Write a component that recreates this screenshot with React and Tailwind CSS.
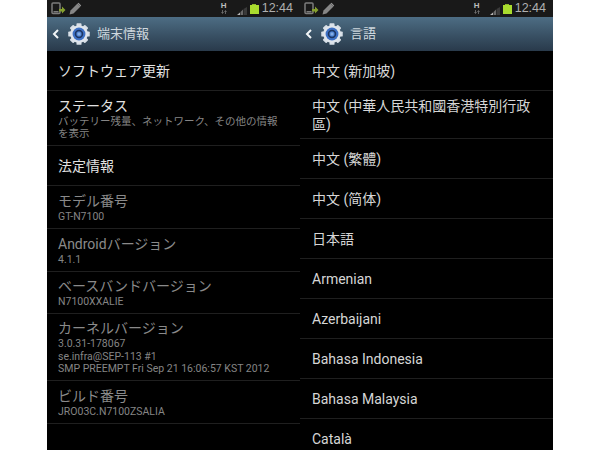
import React from "react";

function Gear({ id }) {
  const teeth = [0, 45, 90, 135, 180, 225, 270, 315];
  return (
    <svg width="22" height="22" viewBox="0 0 26 26" className="shrink-0">
      <defs>
        <radialGradient id={id} cx="50%" cy="50%" r="50%">
          <stop offset="0%" stopColor="#9fc2ee" />
          <stop offset="100%" stopColor="#3a72c8" />
        </radialGradient>
      </defs>
      {teeth.map((a) => (
        <rect key={a} x="10" y="0.3" width="6" height="6" rx="1" fill="#d9e0e8" transform={`rotate(${a} 13 13)`} />
      ))}
      <circle cx="13" cy="13" r="10.4" fill="#dfe5ec" />
      <circle cx="13" cy="13" r="7.6" fill="#3d70c4" />
      <circle cx="13" cy="13" r="5" fill="#1d3560" />
      <circle cx="13" cy="13" r="3.2" fill={`url(#${id})`} />
    </svg>
  );
}

function StatusBar() {
  return (
    <div className="h-[17px] shrink-0 bg-[#191919] flex items-center pl-[4px] pr-[7px]">
      <svg width="15" height="13" viewBox="0 0 15 13" className="shrink-0">
        <rect x="1" y="1" width="8" height="10.500" rx="1" fill="none" stroke="#7c7c7c" strokeWidth="1.5" />
        <rect x="2.500" y="9" width="5" height="1.500" fill="#7c7c7c" />
        <path d="M8 7h3V4.500l3.500 3.500-3.500 3.500V9.500H8z" fill="#86a02f" />
      </svg>
      <svg width="13" height="13" viewBox="0 0 13 13" className="shrink-0 ml-[3px]">
        <path d="M0.500 12.500l1-4L8.500 1.500l3 3-7 7z" fill="#868686" />
        <path d="M9.500 0.800l2.700 2.700-.8.8-2.700-2.700z" fill="#9a9a9a" />
      </svg>
      <div className="ml-auto flex items-center">
        <div className="flex flex-col items-center mr-[10px] mt-[-1px] text-[#bdbdbd] font-['Liberation_Sans',sans-serif]">
          <span className="block h-[8px] text-[8px] font-bold leading-[8px]">H</span>
          <svg width="6" height="4" viewBox="0 0 6 4" className="block">
            <path d="M1.500 0v3M0.500 2l1 1.500 1-1.500M4.500 4V1M3.500 2l1-1.500 1 1.500" fill="none" stroke="#777" strokeWidth="0.8" />
          </svg>
        </div>
        <svg width="10" height="8" viewBox="0 0 10 8" className="shrink-0 mr-[3px] mt-[5px]">
          <path d="M0 8h3V5.500L0 8z" fill="#b5b5b5" />
          <path d="M3.500 8h2.500V2.500L3.500 5z" fill="#6a6a6a" />
          <path d="M6.500 8H10V0L6.500 2z" fill="#3a3a3a" />
        </svg>
        <div className="flex flex-col items-center mr-[3px] mt-[1px]">
          <div className="w-[4px] h-px bg-[#8fb82a]" />
          <div className="w-[9px] h-[9px] bg-[#a9dc2e]" />
        </div>
        <span className="text-[12.5px] leading-[17px] text-[#b0b0b0] font-['Liberation_Sans',sans-serif]">12:44</span>
      </div>
    </div>
  );
}

function Header({ title, id }) {
  return (
    <div className="h-[34px] shrink-0 bg-gradient-to-b from-[#4d6d84] to-[#293a4b] flex items-center">
      <svg width="8" height="10" viewBox="0 0 8 10" className="shrink-0 ml-[5px]">
        <path d="M6 1L2 5l4 4" fill="none" stroke="#f2f5f7" strokeWidth="2" />
      </svg>
      <div className="ml-[8px] flex"><Gear id={id} /></div>
      <span className="ml-[7px] text-[13px] text-[#cfd8de]">{title}</span>
    </div>
  );
}

function Row({ h, title, sub, dim }) {
  return (
    <div style={{ height: h }} className="border-b border-[#1f1f1f] pl-[11px] flex flex-col justify-center shrink-0">
      <div className={`text-[14px] leading-[20px] whitespace-nowrap ${dim ? "text-[#8a8a8a]" : "text-[#e2e2e2]"}`}>{title}</div>
      {sub && sub.map((s) => (
        <div key={s} className="text-[10.5px] leading-[12.500px] text-[#858585] whitespace-nowrap">{s}</div>
      ))}
    </div>
  );
}

function LangRow({ h = 40, children }) {
  return (
    <div style={{ height: h }} className="border-b border-[#1f1f1f] pl-[12px] flex items-center shrink-0">
      <div className="text-[14px] leading-[18px] w-[222px] text-[#d6d6d6]">{children}</div>
    </div>
  );
}

export default function App() {
  return (
    <div className="w-[600px] h-[450px] bg-white flex justify-center overflow-hidden font-['Roboto','Noto_Sans_CJK_JP',sans-serif]">
      <div className="w-[253px] h-[450px] bg-black flex flex-col overflow-hidden">
        <StatusBar />
        <Header title="端末情報" id="g1" />
        <div className="flex flex-col">
          <Row h={40} title="ソフトウェア更新" />
          <Row h={55} title="ステータス" sub={["バッテリー残量、ネットワーク、その他の情報", "を表示"]} />
          <Row h={40} title="法定情報" />
          <Row h={43} title="モデル番号" sub={["GT-N7100"]} dim />
          <Row h={43} title="Androidバージョン" sub={["4.1.1"]} dim />
          <Row h={42} title="ベースバンドバージョン" sub={["N7100XXALIE"]} dim />
          <Row h={67} title="カーネルバージョン" sub={["3.0.31-178067", "se.infra@SEP-113 #1", "SMP PREEMPT Fri Sep 21 16:06:57 KST 2012"]} dim />
          <Row h={43} title="ビルド番号" sub={["JRO03C.N7100ZSALIA"]} dim />
        </div>
      </div>
      <div className="w-[253px] h-[450px] bg-black flex flex-col overflow-hidden">
        <StatusBar />
        <Header title="言語" id="g2" />
        <div className="flex flex-col">
          <LangRow>中文 (新加坡)</LangRow>
          <LangRow h={48}>中文 (中華人民共和國香港特別行政區)</LangRow>
          <LangRow>中文 (繁體)</LangRow>
          <LangRow>中文 (简体)</LangRow>
          <LangRow>日本語</LangRow>
          <LangRow>Armenian</LangRow>
          <LangRow>Azerbaijani</LangRow>
          <LangRow>Bahasa Indonesia</LangRow>
          <LangRow>Bahasa Malaysia</LangRow>
          <LangRow>Català</LangRow>
        </div>
      </div>
    </div>
  );
}
